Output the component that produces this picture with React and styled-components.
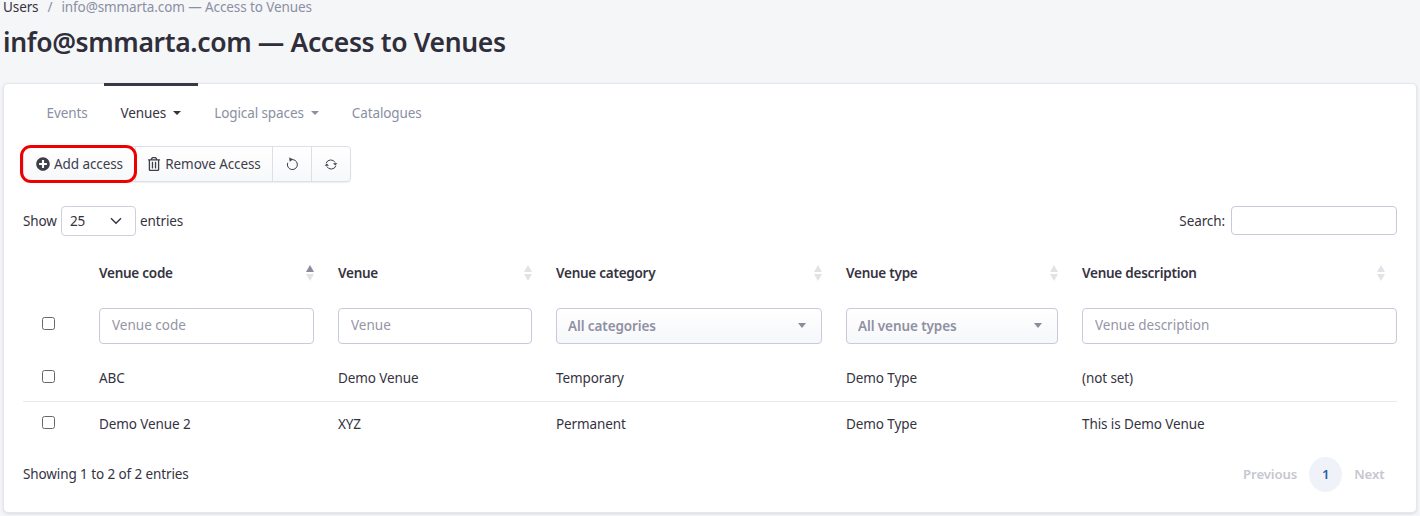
import React from 'react';
import styled, { createGlobalStyle } from 'styled-components';
import { FaPlusCircle, FaRegTrashAlt } from 'react-icons/fa';

const Global = createGlobalStyle`
  * { box-sizing: border-box; }
  html, body { margin: 0; padding: 0; height: 516px; overflow: hidden; }
  body {
    background: #f5f6f8;
    color: #35333f;
    font-family: "Noto Sans", "Open Sans", sans-serif;
    font-size: 14px;
  }
`;

const Page = styled.div`
  padding: 0 3px 3px;
  height: 516px;
  display: flex;
  flex-direction: column;
  overflow: hidden;
`;

const Breadcrumb = styled.div`
  display: flex;
  gap: 9px;
  height: 14px;
  line-height: 14px;
  margin-bottom: 11px;
  color: #8a8fa3;
  font-size: 13.5px;
  letter-spacing: -0.1px;
  b { font-weight: 400; color: #35333f; }
`;

const Title = styled.h1`
  margin: 0 0 24px;
  height: 34px;
  line-height: 34px;
  font-size: 26.5px;
  font-weight: 600;
  letter-spacing: -0.36px;
  color: #2f2e3a;
`;

const Card = styled.section`
  position: relative;
  flex: 1;
  width: 1414px;
  background: #fff;
  border: 1px solid #e5e7ee;
  border-radius: 5px;
  box-shadow: 0 1px 3px rgba(60, 64, 90, 0.15);
  padding: 0 19px;
`;

const Tabs = styled.nav`
  display: flex;
  margin: -1px 0 7px 7px;
  height: 56px;
`;

const Tab = styled.div`
  display: flex;
  align-items: center;
  gap: 7px;
  padding: 0 16.5px;
  font-size: 13.5px;
  letter-spacing: -0.1px;
  color: ${p => (p.$active ? '#35333f' : '#8a8fa3')};
  border-top: 3px solid ${p => (p.$active ? '#3a3845' : 'transparent')};
  &::after {
    content: ${p => (p.$caret ? '""' : 'none')};
    border-left: 4px solid transparent;
    border-right: 4px solid transparent;
    border-top: 4px solid currentColor;
  }
`;

const Toolbar = styled.div`
  display: inline-flex;
  height: 36px;
  position: relative;
  border: 1px solid #dcdfe8;
  border-radius: 4px;
  box-shadow: 0 1px 1px rgba(60, 64, 90, 0.08);
  background: linear-gradient(#fff, #f7f8fa);
`;

const ToolButton = styled.button`
  display: flex;
  align-items: center;
  justify-content: center;
  gap: 4px;
  height: 100%;
  width: ${p => p.$width}px;
  padding: 0;
  background: transparent;
  border: 0;
  border-left: ${p => (p.$first ? '0' : '1px solid #dcdfe8')};
  color: #3e3d4a;
  font: inherit;
  font-size: 13.5px;
  letter-spacing: -0.1px;
  svg { flex: none; }
`;

const Highlight = styled.span`
  position: absolute;
  left: -4px;
  top: -2px;
  width: 117px;
  height: 38px;
  border: 3px solid #ee0000;
  border-radius: 11px;
  pointer-events: none;
`;

const Controls = styled.div`
  display: flex;
  justify-content: space-between;
  align-items: center;
  height: 30px;
  margin-top: 24px;
  font-size: 13.5px;
  letter-spacing: -0.1px;
`;

const Label = styled.label`
  display: flex;
  align-items: center;
  gap: 4px;
`;

const SearchLabel = styled(Label)`
  align-self: flex-start;
`;

const PageSize = styled.div`
  width: 75px;
  height: 30px;
  padding: 0 13px 0 8px;
  border: 1px solid #cfd0de;
  border-radius: 4px;
  display: flex;
  align-items: center;
  justify-content: space-between;
`;

const SearchBox = styled.input`
  width: 166px;
  height: 29px;
  margin-left: 2px;
  border: 1px solid #c9c9dc;
  border-radius: 4px;
  background: #fff;
`;

const Table = styled.table`
  width: 1374px;
  margin-top: 13px;
  border-collapse: collapse;
  table-layout: fixed;
  font-size: 13.5px;
  letter-spacing: -0.1px;
`;

const Col = styled.col`
  width: ${p => p.$w}px;
`;

const Head = styled.th`
  position: relative;
  height: 47px;
  padding: 0 12px;
  text-align: left;
  font-weight: 600;
  font-size: 13.5px;
  letter-spacing: -0.25px;
  color: #35333f;
  &:last-child { padding-right: 0; }
`;

const Sort = styled.span`
  position: absolute;
  right: ${p => p.$right}px;
  top: 16px;
  width: 8px;
  height: 16px;
  &::before, &::after {
    content: '';
    position: absolute;
    left: 0;
    border-left: 4px solid transparent;
    border-right: 4px solid transparent;
  }
  &::before {
    top: 0;
    border-bottom: 7px solid ${p => (p.$asc ? '#8a8c9c' : '#e2e3e9')};
  }
  &::after {
    bottom: 0;
    border-top: 7px solid #e2e3e9;
  }
`;

const Cell = styled.td`
  height: ${p => p.$h}px;
  padding: 0 12px;
  vertical-align: middle;
  &:last-child { padding-right: 0; }
  tr + tr > & { border-top: ${p => (p.$line ? '1px solid #e8e9ee' : '0')}; }
`;

const CheckCell = styled(Cell)`
  padding: 0 0 0 19px;
`;

const Check = styled.input.attrs({ type: 'checkbox' })`
  appearance: none;
  display: block;
  width: 13px;
  height: 13px;
  margin: ${p => (p.$filter ? '-5px' : '-3px')} 0 0;
  border: 1px solid #67666f;
  border-radius: 2.5px;
  background: #fff;
`;

const Filter = styled.input`
  display: block;
  width: 100%;
  height: 36px;
  padding: 0 12px 2px;
  border: 1px solid #c9c9dc;
  border-radius: 4px;
  font: inherit;
  &::placeholder { color: #9495a6; opacity: 1; }
`;

const Dropdown = styled.div`
  display: flex;
  align-items: center;
  justify-content: space-between;
  height: 36px;
  padding: 0 15px 0 11px;
  border: 1px solid #c9c9dc;
  border-radius: 4px;
  background: linear-gradient(#fff, #f6f7fa);
  color: #8f90a2;
  font-weight: 600;
  &::after {
    content: '';
    border-left: 4px solid transparent;
    border-right: 4px solid transparent;
    border-top: 5px solid #8a8c9c;
  }
`;

const Footer = styled.div`
  display: flex;
  justify-content: space-between;
  align-items: center;
  height: 36px;
  margin-top: 9px;
  font-size: 13.5px;
  letter-spacing: -0.1px;
`;

const Pager = styled.div`
  display: flex;
  align-items: center;
  gap: 12px;
  padding-right: 12.5px;
  font-size: 13.2px;
  font-weight: 600;
  color: #c6c7d0;
`;

const PageNumber = styled.span`
  width: 33px;
  height: 35px;
  border-radius: 50%;
  background: #eff2f9;
  color: #2f5fa8;
  display: flex;
  align-items: center;
  justify-content: center;
`;

const UndoIcon = () => (
  <svg width="13" height="14" viewBox="0 0 13 14" fill="none" stroke="#3e3d4a" strokeWidth="1">
    <path d="M4.6 2.9A5 5 0 1 1 1.7 5.8" />
    <path d="M3.4 0.8L6.4 2.2L3.9 4.4Z" fill="#3e3d4a" strokeWidth="0.4" />
  </svg>
);

const RefreshIcon = () => (
  <svg width="14" height="13" viewBox="0 0 14 13" fill="none" stroke="#3e3d4a" strokeWidth="1">
    <path d="M2.1 5.2A5 5 0 0 1 11.2 4.6" />
    <path d="M11.9 7.8A5 5 0 0 1 2.8 8.4" />
    <path d="M9 5.2H13.4L11.2 7.4Z" fill="#3e3d4a" stroke="none" />
    <path d="M5 7.8H0.6L2.8 5.6Z" fill="#3e3d4a" stroke="none" />
  </svg>
);

const Chevron = () => (
  <svg width="12" height="8" viewBox="0 0 12 8" fill="none" stroke="#35333f" strokeWidth="1.4">
    <path d="M1 1.2L6 6.2L11 1.2" />
  </svg>
);

const columns = [
  { title: 'Venue code', right: 12, asc: true, placeholder: 'Venue code' },
  { title: 'Venue', right: 12, placeholder: 'Venue' },
  { title: 'Venue category', right: 12, options: 'All categories' },
  { title: 'Venue type', right: 12, options: 'All venue types' },
  { title: 'Venue description', right: 12, placeholder: 'Venue description' },
];

const rows = [
  ['ABC', 'Demo Venue', 'Temporary', 'Demo Type', '(not set)'],
  ['Demo Venue 2', 'XYZ', 'Permanent', 'Demo Type', 'This is Demo Venue'],
];

const widths = [64, 239, 218, 290, 236, 327];

export default function App() {
  return (
    <Page>
      <Global />
      <Breadcrumb>
        <b>Users</b>
        <span>/</span>
        <span>info@smmarta.com — Access to Venues</span>
      </Breadcrumb>
      <Title>info@smmarta.com — Access to Venues</Title>
      <Card>
        <Tabs>
          <Tab>Events</Tab>
          <Tab $active $caret>Venues</Tab>
          <Tab $caret>Logical spaces</Tab>
          <Tab>Catalogues</Tab>
        </Tabs>
        <Toolbar>
          <ToolButton $first $width={111}>
            <FaPlusCircle size={14} />
            Add access
          </ToolButton>
          <ToolButton $width={137}>
            <FaRegTrashAlt size={14} />
            Remove Access
          </ToolButton>
          <ToolButton $width={39} aria-label="Undo"><UndoIcon /></ToolButton>
          <ToolButton $width={39} aria-label="Refresh"><RefreshIcon /></ToolButton>
          <Highlight />
        </Toolbar>
        <Controls>
          <Label>
            Show
            <PageSize>25 <Chevron /></PageSize>
            entries
          </Label>
          <SearchLabel>
            Search:
            <SearchBox />
          </SearchLabel>
        </Controls>
        <Table>
          <colgroup>
            {widths.map(w => <Col key={w} $w={w} />)}
          </colgroup>
          <thead>
            <tr>
              <Head />
              {columns.map(c => (
                <Head key={c.title}>
                  {c.title}
                  <Sort $right={c.right} $asc={c.asc} />
                </Head>
              ))}
            </tr>
            <tr>
              <CheckCell $h={59}><Check $filter /></CheckCell>
              {columns.map(c => (
                <Cell key={c.title} $h={59}>
                  {c.options
                    ? <Dropdown>{c.options}</Dropdown>
                    : <Filter placeholder={c.placeholder} />}
                </Cell>
              ))}
            </tr>
          </thead>
          <tbody>
            {rows.map((row, i) => (
              <tr key={row[0]}>
                <CheckCell $h={46} $line={i > 0}><Check /></CheckCell>
                {row.map((text, j) => (
                  <Cell key={j} $h={46} $line={i > 0}>{text}</Cell>
                ))}
              </tr>
            ))}
          </tbody>
        </Table>
        <Footer>
          <span>Showing 1 to 2 of 2 entries</span>
          <Pager>
            <span>Previous</span>
            <PageNumber>1</PageNumber>
            <span>Next</span>
          </Pager>
        </Footer>
      </Card>
    </Page>
  );
}
